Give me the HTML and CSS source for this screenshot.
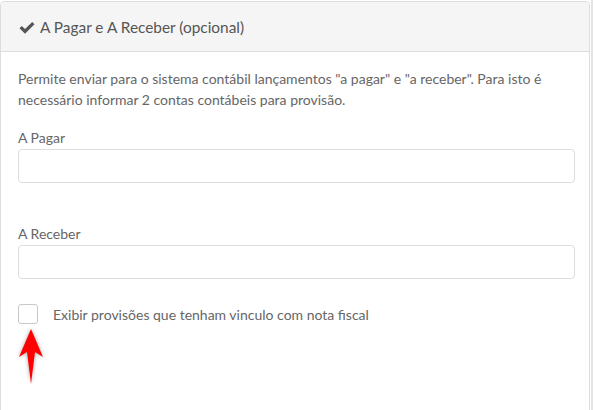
FILE: index.html
```html
<html>

<head>
    <meta charset="UTF-8">
    <meta name="viewport" content="width=device-width, initial-scale=1.0">
    <title>A Pagar e A Receber</title>
    <link rel="stylesheet" href="styles.css">
</head>

<body>
    <div class="page">
        <div class="panel">
            <div class="panel-heading">
                <svg class="check-icon" width="16" height="13" viewBox="0 0 16 13">
                    <path d="M0.5 7.2 L2.8 4.9 L6 8.1 L13.2 0.9 L15.5 3.2 L6 12.7 Z" fill="#555"/>
                </svg>
                <span>A Pagar e A Receber (opcional)</span>
            </div>
            <div class="panel-body">
                <p class="intro">Permite enviar para o sistema contábil lançamentos "a pagar" e "a receber". Para isto é necessário informar 2 contas contábeis para provisão.</p>

                <div class="field">
                    <label for="pagar">A Pagar</label>
                    <input type="text" id="pagar">
                </div>

                <div class="field second">
                    <label for="receber">A Receber</label>
                    <input type="text" id="receber">
                </div>

                <div class="check-row">
                    <span class="check-box"></span>
                    <span class="check-label">Exibir provisões que tenham vinculo com nota fiscal</span>
                    <svg class="arrow" width="30" height="62" viewBox="0 0 30 62">
                        <path d="M14 3 L26 31 L18 26 L14 58 L10 26 L2 31 Z" fill="#ff0000"/>
                    </svg>
                </div>
            </div>
        </div>
        <div class="scroll-edge"></div>
    </div>
</body>

</html>
```

FILE: styles.css
```css
body {
    margin: 0;
    font-family: Lato, "Open Sans", Arial, sans-serif;
    background-color: #ffffff;
    color: #666666;
}

.page {
    display: flex;
    height: 410px;
    overflow: hidden;
}

.panel {
    width: 589px;
    height: 420px;
    margin-top: 1px;
    border: 1px solid #dddddd;
    border-radius: 4px;
    background-color: #ffffff;
}

.scroll-edge {
    width: 2px;
    margin-left: 1px;
    background-color: #e4e4e4;
}

.panel-heading {
    display: flex;
    align-items: center;
    height: 49px;
    padding: 0 18px;
    background-color: #f5f5f5;
    border-bottom: 1px solid #dddddd;
    border-radius: 4px 4px 0 0;
    font-size: 15.4px;
    color: #555555;
}

.check-icon {
    margin-right: 5px;
    margin-top: 1px;
}

.panel-body {
    padding: 16px 14px 0 17px;
    font-size: 14px;
}

.intro {
    margin: 0;
    line-height: 21px;
}

.field {
    margin-top: 18px;
}

.field.second {
    margin-top: 41px;
}

.field label {
    display: block;
    line-height: 20px;
    margin-bottom: 1px;
}

.field input {
    display: block;
    width: 100%;
    height: 34px;
    box-sizing: border-box;
    border: 1px solid #dddddd;
    border-radius: 4px;
    font-family: inherit;
    font-size: 14px;
}

.check-row {
    position: relative;
    display: flex;
    align-items: center;
    margin-top: 25px;
    height: 20px;
}

.check-box {
    width: 20px;
    height: 20px;
    box-sizing: border-box;
    border: 1px solid #c8c8c8;
    border-radius: 3px;
    margin-right: 15px;
}

.arrow {
    position: absolute;
    left: -1px;
    top: 22px;
    filter: drop-shadow(0 0 2px rgba(0, 0, 0, 0.35));
}
```
